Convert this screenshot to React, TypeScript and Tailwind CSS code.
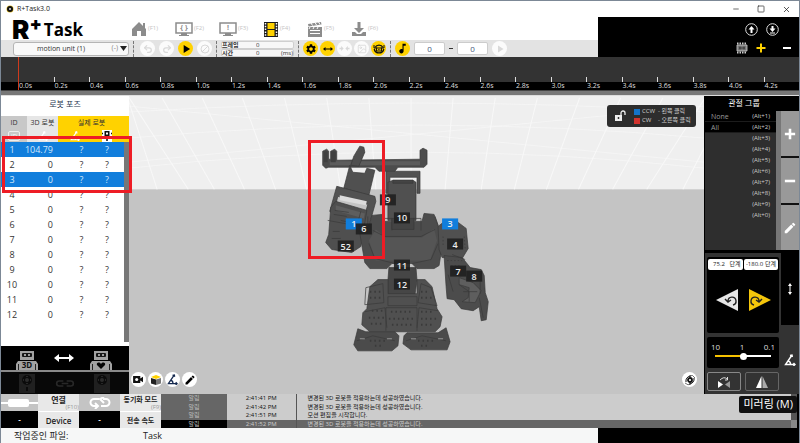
import { useState, type ReactNode } from "react";
import clsx from "clsx";
import { Image, Minus, Redo2, Square, Undo2, X } from "lucide-react";
import { MdEdit, MdMusicNote, MdPlayArrow, MdSettings } from "react-icons/md";

interface Pose {
  id: number;
  value: string;
  selected?: boolean;
}

interface LogEntry {
  time: string;
  message: string;
  active?: boolean;
}

const POSES: Pose[] = [
  { id: 1, value: "104.79", selected: true },
  { id: 2, value: "0" },
  { id: 3, value: "0", selected: true },
  ...[4, 5, 6, 7, 8, 9, 10, 11, 12].map((id) => ({ id, value: "0" })),
];

const LOGS: LogEntry[] = [
  { time: "2:41:41 PM", message: "변경된 3D 로봇을 적용하는데 성공하였습니다." },
  { time: "2:41:42 PM", message: "변경된 3D 로봇을 적용하는데 성공하였습니다." },
  { time: "2:41:51 PM", message: "모션 편집을 시작합니다." },
  { time: "2:41:52 PM", message: "변경된 3D 로봇을 적용하는데 성공하였습니다.", active: true },
];

const GROUPS = ["None", "All", "", "", "", "", "", "", "", ""];

const TICKS = Array.from({ length: 22 }, (_, i) => `${(i * 0.2).toFixed(1)}s`);

const JOINTS = [
  { id: "1", x: 354, y: 223, blue: true },
  { id: "6", x: 364, y: 228 },
  { id: "52", x: 346, y: 245 },
  { id: "9", x: 388, y: 199 },
  { id: "10", x: 402, y: 217 },
  { id: "3", x: 450, y: 223, blue: true },
  { id: "4", x: 455, y: 243 },
  { id: "11", x: 402, y: 264 },
  { id: "12", x: 402, y: 283 },
  { id: "7", x: 458, y: 270 },
  { id: "8", x: 474, y: 275 },
];

function RoundButton({ label, tone, children }: { label: string; tone: "on" | "off" | "white"; children: ReactNode }) {
  return (
    <button
      aria-label={label}
      className={clsx(
        "flex size-[15px] shrink-0 items-center justify-center rounded-full",
        tone === "on" && "bg-[#ffd200] text-black",
        tone === "off" && "bg-[#fbfbfb] text-[#d9d9d9]",
        tone === "white" && "bg-white text-black"
      )}
    >
      {children}
    </button>
  );
}

function Divider() {
  return <div className="h-4 shrink-0 border-l border-dashed border-[#777]" />;
}

function DoubleArrow({ className }: { className?: string }) {
  return (
    <svg viewBox="0 0 20 8" className={className} fill="currentColor">
      <path d="M0 4 5 0v3h10V0l5 4-5 4V5H5v3z" />
    </svg>
  );
}

function HomeIcon() {
  return (
    <svg viewBox="0 0 16 16" className="size-4" fill="#8c8c8c">
      <path d="M8 1 1 8v7h5v-5h4v5h5V8l-1-1V2h-2v3z" />
    </svg>
  );
}

function MonitorIcon({ sign }: { sign: string }) {
  return (
    <svg viewBox="0 0 18 16" className="h-4 w-[18px]">
      <path d="M1 2h16v10H1z" fill="#fff" stroke="#8c8c8c" strokeWidth="1.5" />
      <path d="M6 12h6v2h2v1H4v-1h2z" fill="#8c8c8c" />
      <text x="9" y="9" textAnchor="middle" fontSize="7" fontWeight="700" fill="#8c8c8c">
        {sign}
      </text>
    </svg>
  );
}

function FilmIcon() {
  return (
    <svg viewBox="0 0 16 16" className="size-4">
      <path d="M1 1h14v15H1z" fill="#1c1c1c" />
      <path d="M4.500 2h7v6h-7zM4.500 9h7v6h-7z" fill="#ffd200" />
      <path d="M2.500 2v13M13.500 2v13" stroke="#fff" strokeWidth="1.500" strokeDasharray="1.500 1.300" />
    </svg>
  );
}

function ClapperIcon() {
  return (
    <svg viewBox="0 0 16 16" className="size-4">
      <path d="M1 3 14 1l.500 2.500L1.500 5.500zM1 6h14v10H1z" fill="#8c8c8c" />
      <path d="m4 2 1.500 2.500M8 1.500 9.500 4M11.500 1 13 3.500M3 6l-1 2M7 6 6 8M11 6l-1 2" stroke="#fff" />
      <path d="M3 9.500h10M3 12.500h10" stroke="#fff" strokeWidth="1.200" />
    </svg>
  );
}

function DownloadIcon() {
  return (
    <svg viewBox="0 0 16 16" className="size-4" fill="#8c8c8c">
      <path d="M6.500 1h3v6H13l-5 5-5-5h3.500zM1 11h3l2 2h4l2-2h3v4H1z" />
    </svg>
  );
}

function AngleIcon({ className }: { className?: string }) {
  return (
    <svg viewBox="0 0 12 12" className={className} fill="none" stroke="currentColor" strokeWidth="1.400">
      <path d="M8 1 1.500 10.500H11M4 7c2 .3 2.500 1.500 2.500 3M6 1.500 8 1l.4 2M9.500 9l1.500 1.500L9.500 12" />
    </svg>
  );
}

function LinkIcon({ className }: { className?: string }) {
  return (
    <svg viewBox="0 0 24 10" className={className} fill="none" stroke="currentColor" strokeWidth="2">
      <path d="M10 2H5a3 3 0 0 0 0 6h5M14 2h5a3 3 0 0 1 0 6h-5M8 5h8" />
    </svg>
  );
}

function RobotIcon({ mark }: { mark: "3D" | "heart" }) {
  return (
    <svg viewBox="0 0 24 20" className="h-5 w-6">
      <path d="M5 1h14v9H5zM3 11h18l2 3v6H1v-6z" fill="#a2a2a2" />
      <rect x="7" y="3" width="10" height="4" rx="1" fill="#161616" />
      <path d="M9 5h2M13 5h2" stroke="#ccc" strokeWidth="1.500" />
      <path d="M3.500 14v6M20.500 14v6" stroke="#222" />
      {mark === "3D" ? (
        <text x="12" y="18" textAnchor="middle" fontSize="8" fontWeight="700" fill="#111">
          3D
        </text>
      ) : (
        <path d="m12 19-4-4c-1-2 2-4 4-1 2-3 5-1 4 1z" fill="#050505" />
      )}
    </svg>
  );
}

function ServoIcon({ body }: { body: boolean }) {
  return (
    <svg viewBox="0 0 18 20" className="h-5 w-[18px]">
      <rect x="1" y="1" width="16" height="19" fill="#202020" />
      <circle cx="9" cy="7" r="5" fill="#0b0b0b" />
      <circle cx="9" cy="7" r="2" fill="#2c2c2c" />
      <path d="M9 3v1M9 10v1M5 7h1M12 7h1" stroke="#444" />
      {body && <path d="M9 14v4" stroke="#0b0b0b" strokeWidth="2" />}
    </svg>
  );
}

function TitleBar() {
  return (
    <div className="flex h-4 items-center bg-white pl-[5px] text-[#222]">
      <svg viewBox="0 0 8 8" className="size-2">
        <circle cx="4" cy="4" r="3.500" fill="#e8bd16" />
        <path d="M4 1a3 3 0 1 0 0 6 3 3 0 0 0 0-6" fill="#111" />
        <circle cx="4" cy="4" r="1" fill="#ddd" />
      </svg>
      <span className="ml-[3px] text-[7px]">R+Task3.0</span>
      <div className="ml-auto flex items-center gap-[17px] pr-2">
        <button aria-label="Minimize"><Minus size={8} /></button>
        <button aria-label="Maximize"><Square size={8} /></button>
        <button aria-label="Close"><X size={9} /></button>
      </div>
    </div>
  );
}

function NavBar() {
  const items = [
    { icon: <HomeIcon />, key: "(F1)" },
    { icon: <MonitorIcon sign="{ }" />, key: "(F2)" },
    { icon: <MonitorIcon sign="!" />, key: "(F3)" },
    { icon: <FilmIcon />, key: "(F4)" },
    { icon: <ClapperIcon />, key: "(F5)" },
    { icon: <DownloadIcon />, key: "(F6)" },
  ];
  return (
    <div className="flex h-[23px] items-center bg-white pl-[11px]">
      <div className="flex w-[119px] items-center pt-[3px] text-black">
        <span className="font-['Inter'] text-[26px] leading-[20px] font-black">R</span>
        <span className="-mt-3 font-['Inter'] text-[18px] leading-[12px] font-black">+</span>
        <span className="ml-[2px] text-[17px] leading-[20px] font-bold">Task</span>
      </div>
      {items.map((item) => (
        <button key={item.key} className="flex w-11 items-center gap-px">
          {item.icon}
          <span className="text-[6px] text-[#c4c4c4]">{item.key}</span>
        </button>
      ))}
    </div>
  );
}

function Toolbar() {
  return (
    <div className="flex h-[17px] items-center gap-1 bg-[#e3e3e3] pl-3">
      <div className="relative h-[14px] w-[116px] shrink-0">
        <select
          aria-label="motion unit"
          className="block h-[14px] w-full appearance-none rounded-[3px] border border-[#b5b5b5] bg-[#f9f9f9] pr-5 text-center text-[7px] leading-[12px] text-[#333]"
        >
          <option>motion unit (1)</option>
        </select>
        <span className="pointer-events-none absolute inset-y-0 right-[2px] flex items-center gap-[2px] text-[7px] text-[#888]">
          (-)
          <svg viewBox="0 0 7 5" className="h-[5px] w-[7px]">
            <path d="M0 0h7L3.500 5z" fill="#222" />
          </svg>
        </span>
      </div>
      <Divider />
      <div className="flex gap-1 pl-[2px]">
        <RoundButton label="Undo" tone="off"><Undo2 size={10} strokeWidth={3} /></RoundButton>
        <RoundButton label="Redo" tone="off"><Redo2 size={10} strokeWidth={3} /></RoundButton>
        <RoundButton label="Play" tone="on"><MdPlayArrow size={14} /></RoundButton>
        <RoundButton label="Stop" tone="off">
          <svg viewBox="0 0 10 10" className="size-[10px]" fill="none" stroke="currentColor">
            <circle cx="5" cy="5" r="4" />
            <path d="M8 2 2 8" />
          </svg>
        </RoundButton>
      </div>
      <Divider />
      <div className="w-[73px] shrink-0 text-[6px] font-bold text-[#333]">
        {["프레임", "시간"].map((label) => (
          <label key={label} className="flex h-2 items-center rounded-[2px] border border-[#cfcfcf] bg-[#f7f7f7] leading-[6px]">
            <span className="w-[30px]">{label}</span>
            <input defaultValue="0" className="h-[6px] w-4 bg-transparent pl-1 font-normal" />
            {label === "시간" && <span className="ml-auto font-normal">(ms)</span>}
          </label>
        ))}
      </div>
      <Divider />
      <div className="flex gap-[2px]">
        <RoundButton label="Settings" tone="on"><MdSettings size={12} /></RoundButton>
        <RoundButton label="Stretch" tone="on"><DoubleArrow className="h-1 w-[10px]" /></RoundButton>
        <RoundButton label="Shrink" tone="off">
          <svg viewBox="0 0 12 6" className="h-[5px] w-[11px]" fill="currentColor">
            <path d="M0 2h2V0l3 3-3 3V4H0zM12 2h-2V0L7 3l3 3V4h2z" />
          </svg>
        </RoundButton>
        <RoundButton label="Picture" tone="off"><Image size={10} strokeWidth={2} /></RoundButton>
        <RoundButton label="Robot view" tone="on">
          <svg viewBox="0 0 12 12" className="size-3" fill="none" stroke="#111">
            <path d="M2 4.500a4.500 4.500 0 0 1 8 0M1.200 6a4.900 4.900 0 0 0 9.600 0" strokeWidth="1.300" />
            <path d="M1 2v3h3M11 2v3H8" />
            <rect x="3.500" y="5" width="5" height="3" />
            <path d="M5 6.500h.7M6.500 6.500h.7" />
          </svg>
        </RoundButton>
      </div>
      <Divider />
      <RoundButton label="Music" tone="on"><MdMusicNote size={13} /></RoundButton>
      <input aria-label="Start" defaultValue="0" className="h-[13px] w-[31px] rounded-[2px] border border-[#ccc] bg-white text-center text-[8px] text-[#445a7a]" />
      <span className="h-px w-1 bg-[#333]" />
      <input aria-label="End" defaultValue="0" className="h-[13px] w-[31px] rounded-[2px] border border-[#ccc] bg-white text-center text-[8px] text-[#445a7a]" />
      <RoundButton label="Play music" tone="off"><MdPlayArrow size={12} /></RoundButton>
    </div>
  );
}

function CornerTools() {
  return (
    <div className="flex w-[201px] shrink-0 flex-col items-end justify-between bg-black pt-[6px] pr-[7px] pb-[3px] text-white">
      <div className="flex gap-2 pr-[13px]">
        {["M6.500 3 3.500 6.500h2V10h2V6.500h2z", "M5.500 3h2v2.500h2L6.500 9l-3-3.500h2zM4 9.500h5v1H4z"].map((d) => (
          <button key={d} aria-label="Transfer">
            <svg viewBox="0 0 13 13" className="size-[13px]">
              <circle cx="6.500" cy="6.500" r="5.800" fill="none" stroke="#ddd" />
              <path d={d} fill="#fff" />
            </svg>
          </button>
        ))}
      </div>
      <div className="flex items-center">
        <button aria-label="Frames">
          <svg viewBox="0 0 12 12" className="size-3">
            <path d="M1 1.500h10M1 10.500h10" stroke="#ccc" strokeWidth="2" strokeDasharray="1.500 1" />
            <path d="M1 3h10v6H1z" fill="#777" stroke="#ccc" strokeWidth=".8" />
            <path d="M3 6h6M4 4.500v3M8 4.500v3" stroke="#222" strokeWidth=".7" />
          </svg>
        </button>
        <button aria-label="Add frame" className="ml-2 text-[#ffd200]">
          <svg viewBox="0 0 10 10" className="size-[10px]">
            <path d="M5 .5v9M.5 5h9" stroke="currentColor" strokeWidth="2" />
          </svg>
        </button>
        <button aria-label="Remove frame" className="ml-4">
          <svg viewBox="0 0 10 10" className="size-[10px]">
            <path d="M1 5h8" stroke="currentColor" strokeWidth="2" />
          </svg>
        </button>
      </div>
    </div>
  );
}

function Timeline() {
  return (
    <div className="shrink-0">
      <div className="relative bg-[linear-gradient(to_bottom,#333_25px,#000_25px)] pl-[17px]">
        <div className="flex h-[33px] items-end">
          {TICKS.map((tick) => (
            <div key={tick} className="flex-1">
              <div className="h-[5px] border-l border-[#ddd]" />
              <div className="pl-px text-[7px] leading-[8px] text-[#ddd]">{tick}</div>
            </div>
          ))}
        </div>
        <div className="absolute top-0 left-[17px] h-full w-px bg-[#d03a1c]" />
      </div>
      <div className="h-[6px] border-t border-b border-t-[#444] border-b-[#ddd] bg-[#777]" />
    </div>
  );
}

function PosePanel() {
  return (
    <aside className="flex w-32 shrink-0 flex-col bg-white">
      <h2 className="h-5 text-center text-[8px] leading-[16px] text-[#27364f]">로봇 포즈</h2>
      <div className="flex flex-1 flex-col">
        <table className="w-full table-fixed border-collapse text-center">
          <colgroup>
            <col className="w-[26px]" />
            <col className="w-[31px]" />
            <col />
            <col className="w-[20px]" />
            <col className="w-[12px]" />
          </colgroup>
          <thead className="text-[7px] leading-[13px] text-[#333]">
            <tr className="h-[13px]">
              <th className="bg-[#c8c8c8] font-normal">ID</th>
              <th className="bg-[#e6e6e6] font-normal whitespace-nowrap">3D 로봇</th>
              <th colSpan={3} className="bg-[#ffd200] pr-1 font-normal">실제 로봇</th>
            </tr>
            <tr className="h-[13px] text-white">
              <td className="bg-[#c8c8c8]">
                <span className="mx-auto block h-[10px] w-3 rounded-[2px] border border-[#eee] text-[6px] leading-[8px]">ID</span>
              </td>
              <td className="bg-[#e6e6e6]"><AngleIcon className="mx-auto size-[10px]" /></td>
              <td className="bg-[#ffd200]"><AngleIcon className="ml-3 size-[10px]" /></td>
              <td className="bg-[#ffd200]">
                <svg viewBox="0 0 12 12" className="mx-auto size-3">
                  <path d="M1 0h10v12H1z" fill="#fff" />
                  <path d="M3.500 1h5v5h-5z" fill="#111" />
                  <path d="M5 2.500h2v2H5z" fill="#fff" />
                  <path d="M6 6v5M1 3.500h1M10 3.500h1" stroke="#111" strokeWidth="1.500" />
                </svg>
              </td>
              <td className="bg-[#ffd200]" />
            </tr>
          </thead>
        </table>
        <div className="flex flex-1 bg-white pb-6">
          <div className="flex-1">
            <table className="w-full table-fixed border-collapse text-[9px] leading-[14px]">
              <tbody>
                {POSES.map((pose) => (
                  <tr
                    key={pose.id}
                    className={clsx("h-[15px]", pose.selected ? "bg-[#117edc] text-[#d3e8fb]" : "text-[#333]")}
                  >
                    <td className="w-[22px] text-center">{pose.id}</td>
                    <td className="w-[30px] text-right">{pose.value}</td>
                    <td className="pl-4 text-center">?</td>
                    <td className="w-[30px] pr-1 text-center">?</td>
                  </tr>
                ))}
              </tbody>
            </table>
          </div>
          <div className="-mb-5 w-[5px] bg-[#777]" />
        </div>
      </div>
      <div className="bg-black">
        <div className="flex h-6 items-end justify-between pr-4 pl-[14px] text-white">
          <RobotIcon mark="3D" />
          <DoubleArrow className="mb-2 h-2 w-5" />
          <RobotIcon mark="heart" />
        </div>
        <div className="flex h-6 items-center justify-between border-t-2 border-[#8a8a8a] bg-[#080808] pr-[18px] pl-[17px] text-[#282828]">
          <ServoIcon body />
          <LinkIcon className="h-[9px] w-5" />
          <ServoIcon body={false} />
        </div>
      </div>
    </aside>
  );
}

function RobotScene() {
  return (
    <svg viewBox="129 96 575 297" preserveAspectRatio="xMidYMid slice" className="absolute inset-0 h-full w-full">
      <path d="M0 96h1000v93H0z" fill="#efefef" />
      <path d="M0 189h1000v204H0z" fill="#c4c4c4" />
      <g stroke="#f8f8f8" fill="none">
        <path d="m129 99 29 90M129 96l60 93M163 98l52 91M203 98l42 91M243 98l33 91M285 98l22 91M327 98l14 91M369 98l7 91M411 98v91M453 98l-8 91M495 98l-14 91M537 98l-23 91M579 98l-33 91M620 98l-42 91M662 98l-50 91M704 98l-58 91M704 146l-22 43" />
        <path d="M129 112q288 -18 575 0M129 138q288 -26 575 0M129 168q288 -32 575 0M129 106l575 56M129 162l575 -56" strokeWidth=".6" />
      </g>

      <g stroke="#3a3a3a" strokeWidth=".7" strokeLinejoin="round">
        {/* head bracket and wide bar */}
        <path d="M386 171h34v22h-3v-16h-27v16h-4z" fill="#525252" />
        <path d="M388 182l5-2h20l3 2v38h-28z" fill="#505050" />
        <path d="M393 180h20v3h-20z" fill="#444" />
        <path d="M323 151l4-2 2 2v8h2v-8l4-2 2 2v9l83-1v-9l3-2 4 2v14l-3 3h-26l-3 4h-16l-4-4h-46l-3 1-3-3z" fill="#4c4c4c" />
        <path d="M330 161h90v4h-90z" fill="#5c5c5c" stroke="none" />
        <path d="M324 151h4v11h-4zM331 151h5v11h-5z" fill="#404040" stroke="none" />

        {/* raised arm */}
        <path d="M360 146l4 1 1 5-6 14-8-1 3-9z" fill="#505050" />
        <path d="M350 165l3 7 12 1 2-5 8 2-6 25-25-7z" fill="#505050" />
        <path d="M337 186l38 10 1 5-9 32-7-1 8-28-30-8-4 18-4-3z" fill="#525252" />
        <path d="M340 195l27 6-1 4-26-5z" fill="#dcdcdc" stroke="none" />
        <path d="M336 201l31 9-6 36-9 6-20-3-6-7 3-8 1-13 1-14z" fill="#4f4f4f" />
        <path d="M336 205l29 8-1 5-28-8z" fill="#5e5e5e" stroke="none" />
        <path d="M335 210l14 2M334 214l13 2M341 220l9 2M361 211l-4 15M333 231h7M332 238h9M328 220l33 6" />

        {/* chest */}
        <path d="M369 227l3-12 10-1 3 7h37l2-8 10 1 4 11 6 9-5 31-5 3h-17l-5-5h-20l-5 5h-17l-5-6-5-29z" fill="#4c4c4c" />
        <path d="M376 229l10 8h36l12-9 3 12-7 20h-54l-7-20z" fill="#555" stroke="none" />
        <path d="M373 230l12 6h36l14-7M369 243l6 15 20 5M438 243l-7 16-19 4M385 218h7v12M413 218h8v12M368 216v14M435 216l3 9" fill="none" />
        <path d="M392 218h22v11h-22z" fill="#444" />

        {/* lowered arm */}
        <path d="M438 226l5-4h15l8 6 2 20-6 10-20-1-3-8z" fill="#505050" />
        <path d="M444 255l18 2 8 10 11 2 3 6 1 17 3 9-2 18-5 1-2-14-6 4-12-2-7-9-7-1-1-12z" fill="#4c4c4c" />
        <path d="M459 277l14 5 8 8-6 12-13-1 6-4 1-10-10-3z" fill="#5e5e5e" />
        <path d="M452 254l13 5M448 274l5 17M480 278v15M463 291h14M479 297l4 20M459 284l10 7v10" fill="none" />
        <path d="M447 260h15M451 265h9M443 236v10M464 236l1 12" strokeDasharray="1.500 2" />

        {/* waist and legs */}
        <path d="M389 267h27l1 13-2 14h-27v-14z" fill="#464646" />
        <path d="M370 286l8-7h10v14h29v-14h8l7 7 5 22 5 8-2 10-5 5h-65l-8-7 1-12 4-4z" fill="#505050" />
        <path d="M358 328l8 3h29l4 4-1 10-6 5h-34l-4-6zM407 332h31l8-5 4 14-3 8h-36l-8-6 1-8z" fill="#4b4b4b" />
        <path d="M366 287l17-4 1 19-19 2zM421 283l10 4 6 18-19-3zM388 296h29v9h-29zM365 311l20-4 2 20M438 310l-19-3-2 20M386 307h31v23M386 307v23M357 340l16-5 22 5M406 340l16-5 24 5" fill="none" />
        <path d="M372 310h12M369 317h15M371 323h13M391 311h22M389 318h26M392 324h20M421 311h12M421 318h16M421 324h13M370 291h12M421 291h9M370 297h11M421 297h12M370 340h16M418 340h16M375 345h8M421 345h8" strokeWidth="2" strokeDasharray="1.500 3" />
        <path d="M360 338h5M387 338h5M411 338h5M438 338h5" stroke="#bbb" />
      </g>

      {JOINTS.map((joint) => (
        <g key={joint.id}>
          <rect x={joint.x - 8} y={joint.y - 5} width="16" height="11" fill={joint.blue ? "#117edc" : "#1f1f1f"} fillOpacity={joint.blue ? 1 : 0.9} />
          <text x={joint.x} y={joint.y + 4} textAnchor="middle" fontSize="9" fontWeight="600" fill="#eee">
            {joint.id}
          </text>
        </g>
      ))}
    </svg>
  );
}

function Viewport() {
  return (
    <main className="relative flex min-w-0 flex-1 flex-col justify-between">
      <RobotScene />
      <div className="relative mt-[9px] mr-2 flex h-[22px] w-[89px] items-center gap-2 self-end rounded-[3px] bg-[#2d2d2d] pl-[7px] text-[#ccc]">
        <svg viewBox="0 0 12 12" className="size-3">
          <path d="M1 5h7v6H1z" fill="#eee" />
          <path d="M7 5V3a2 2 0 0 1 4 0v2" fill="none" stroke="#eee" strokeWidth="1.300" />
          <path d="M4.500 7v2" stroke="#333" strokeWidth="1.500" />
        </svg>
        <div className="text-[6px] leading-[9px]">
          <div className="flex items-center gap-[2px]">
            <span className="size-[6px] bg-[#1473c8]" />
            <span className="w-[14px]">CCW</span>
            <span className="whitespace-nowrap">- 왼쪽 클릭</span>
          </div>
          <div className="flex items-center gap-[2px]">
            <span className="size-[6px] bg-[#d2322d]" />
            <span className="w-[14px]">CW</span>
            <span className="whitespace-nowrap">- 오른쪽 클릭</span>
          </div>
        </div>
      </div>
      <div className="relative mb-[7px] flex gap-[2px] pr-[7px] pl-[2px]">
        <RoundButton label="Camera" tone="white">
          <svg viewBox="0 0 12 10" className="h-[9px] w-[11px]">
            <path d="M0 1h8v3l3-2v6L8 6v3H0z" fill="#111" />
            <circle cx="4" cy="5" r="1.700" fill="#fff" />
          </svg>
        </RoundButton>
        <RoundButton label="Cube" tone="white">
          <svg viewBox="0 0 12 12" className="size-3">
            <path d="M1 3l5-2 5 2-5 2z" fill="#ffd200" />
            <path d="M1 4l5 1.500V11L1 9.500z" fill="#222" />
            <path d="M11 4 6 5.500V11l5-1.500z" fill="#777" />
          </svg>
        </RoundButton>
        <RoundButton label="Angle" tone="white"><AngleIcon className="size-[11px] text-[#14284e]" /></RoundButton>
        <RoundButton label="Edit" tone="white"><MdEdit size={12} /></RoundButton>
        <span className="flex-1" />
        <RoundButton label="Reset view" tone="white">
          <svg viewBox="0 0 12 12" className="size-3" fill="none" stroke="#111">
            <circle cx="6" cy="6" r="2" strokeWidth="1.800" />
            <path d="M2 8a5 5 0 0 1 5-6M10 4a5 5 0 0 1-5 6" />
            <path d="M1 9q3 3 6 1M5 2q4-2 6 2" strokeWidth=".6" />
          </svg>
        </RoundButton>
      </div>
    </main>
  );
}

function JointPanel() {
  const [step, setStep] = useState(50);
  return (
    <aside className="flex w-[95px] shrink-0 flex-col border-l border-black bg-black text-white">
      <h2 className="h-[15px] pr-4 text-center text-[8px] leading-[14px]">관절 그룹</h2>
      <div className="flex flex-1 bg-[#2e2e2e]">
        <div className="flex flex-1 flex-col">
          {GROUPS.map((name, i) => (
            <button
              key={i}
              className={clsx(
                "flex h-[11px] items-center justify-between pr-1.5 pl-1.5 text-[7px] leading-[11px] text-[#999]",
                name && "border-b border-[#1c1c1c] bg-black"
              )}
            >
              <span>{name}</span>
              <span className="text-[6px] text-[#ccc]">(Alt+{(i + 1) % 10})</span>
            </button>
          ))}
        </div>
        <div className="w-[5px] bg-[#777]" />
        <div className="flex w-[18px] flex-col gap-[2px] bg-[#111]">
          {["M7 1v12M1 7h12", "M1 7h12"].map((d) => (
            <button key={d} aria-label="Group" className="flex flex-1 items-center justify-center bg-[#999]">
              <svg viewBox="0 0 14 14" className="size-3">
                <path d={d} stroke="#fff" strokeWidth="3" />
              </svg>
            </button>
          ))}
          <button aria-label="Edit group" className="flex flex-1 items-center justify-center bg-[#999]">
            <MdEdit size={14} />
          </button>
        </div>
      </div>
      <div className="flex h-36 border-t-[3px] border-black">
        <div className="flex flex-1 flex-col gap-1 bg-[#333] p-[2px] pt-1">
          <div className="flex flex-1 flex-col rounded-[2px] bg-black">
            <div className="flex gap-px p-px pt-[2px]">
              {["75.2", "-180.0"].map((value) => (
                <label key={value} className="flex h-[11px] flex-1 items-center justify-between rounded-[2px] bg-white px-[2px] text-[6px] whitespace-nowrap text-[#222]">
                  <input defaultValue={value} className="w-[18px] text-center" />
                  단계
                </label>
              ))}
            </div>
            <div className="flex flex-1 items-center justify-center gap-[11px] pb-1">
              <button aria-label="Rotate left">
                <svg viewBox="0 0 22 22" className="size-[22px]">
                  <path d="M0 11 22 0v22z" fill="#e6e6e6" />
                  <path d="M12 12a4 4 0 1 1 5 4M9 10l3 3 3-2" fill="none" stroke="#222" strokeWidth="1.400" />
                </svg>
              </button>
              <button aria-label="Rotate right">
                <svg viewBox="0 0 22 22" className="size-[22px]">
                  <path d="M22 11 0 0v22z" fill="#f4c60b" />
                  <path d="M10 12a4 4 0 1 0-5 4M13 10l-3 3-3-2" fill="none" stroke="#222" strokeWidth="1.400" />
                </svg>
              </button>
            </div>
          </div>
          <div className="h-[31px] rounded-[2px] bg-black px-1 pt-[5px]">
            <div className="flex justify-between text-[8px] leading-[10px] text-[#ddd]">
              <span>10</span>
              <span>1</span>
              <span>0.1</span>
            </div>
            <div className="flex h-2 items-center px-1">
              <input
                type="range"
                aria-label="Step"
                value={step}
                onChange={(e) => setStep(Number(e.target.value))}
                className="h-[2px] w-full appearance-none bg-[linear-gradient(to_right,#f6c200_50%,#fff_50%)] [&::-webkit-slider-thumb]:size-[7px] [&::-webkit-slider-thumb]:appearance-none [&::-webkit-slider-thumb]:rounded-full [&::-webkit-slider-thumb]:bg-white"
              />
            </div>
          </div>
          <div className="flex gap-1 pb-px">
            <button aria-label="Flip" className="flex h-[19px] flex-1 items-center justify-center rounded-[2px] border border-[#888]">
              <svg viewBox="0 0 14 12" className="h-3 w-[14px]">
                <path d="M1 5v7l5-3.500z" fill="#fff" />
                <path d="M13 5v7L8 8.500z" fill="#999" />
                <path d="M3 4q4-4 7-1M10.500 1v3H8" fill="none" stroke="#ddd" />
              </svg>
            </button>
            <button aria-label="미러링 (M)" className="flex h-[19px] flex-1 items-center justify-center rounded-[2px] border border-[#666]">
              <svg viewBox="0 0 14 12" className="h-3 w-[14px]">
                <path d="M6.500 0v12H1z" fill="#fff" />
                <path d="M7.500 0v12H13z" fill="#aaa" />
              </svg>
            </button>
          </div>
        </div>
        <div className="flex w-[18px] flex-col bg-[#333]">
          <button aria-label="Move" className="flex h-[72px] items-center justify-center bg-black">
            <svg viewBox="0 0 6 12" className="h-3 w-[6px]" fill="#fff">
              <path d="M3 0l2 3H3.500v6H5l-2 3-2-3h1.500V3H1z" />
            </svg>
          </button>
          <button aria-label="Angle" className="flex flex-1 items-center justify-center">
            <AngleIcon className="size-3" />
          </button>
        </div>
      </div>
    </aside>
  );
}

function ConnectionPanel() {
  return (
    <div className="grid w-40 shrink-0 grid-cols-[37px_1fr_41px_1fr] grid-rows-2 text-[8px] leading-[9px] font-semibold text-[#222]">
      <div className="flex items-center bg-[#c4c4c4]">
        <svg viewBox="0 0 37 12" className="h-3 w-full" fill="#fff">
          <path d="M0 5h37v2H0z" />
          <rect x="7" y="2" width="21" height="8" rx="2" />
        </svg>
      </div>
      <button className="flex flex-col items-center justify-between bg-[#e8e8e8] pt-px">
        <span className="font-bold">연결</span>
        <span className="self-end text-[6px] leading-[7px] font-normal text-[#999]">(F10)</span>
      </button>
      <div className="flex items-center justify-center bg-[#c4c4c4] text-white">
        <svg viewBox="0 0 24 12" className="h-3 w-6" fill="none" stroke="currentColor" strokeWidth="2">
          <path d="M11 2H6a3.500 3.500 0 0 0 0 7h3M13 9h5a3.500 3.500 0 0 0 0-7h-3M7 6l3 3-3 3M16 0l-4 2 4 4" />
        </svg>
      </div>
      <button className="flex flex-col items-center justify-between bg-[#e8e8e8] pt-px">
        <span className="text-[7px] font-bold whitespace-nowrap">동기화 모드</span>
        <span className="self-end text-[6px] leading-[7px] font-normal text-[#999]">(F9)</span>
      </button>
      <div className="flex items-center justify-center bg-black text-white">-</div>
      <button className="border-t border-white bg-[#e8e8e8]">Device</button>
      <div className="flex items-center justify-center bg-black text-white">-</div>
      <button className="border-t border-white bg-[#e8e8e8] text-[7px] font-bold whitespace-nowrap">전송 속도</button>
    </div>
  );
}

function LogPanel() {
  return (
    <div className="flex min-w-0 flex-1 bg-black pr-[2px]">
      <table className="flex-1 table-fixed border-collapse text-[6px] leading-[8px] text-[#111]">
        <tbody>
          {LOGS.map((log) => (
            <tr key={log.time} className={clsx("h-2", log.active ? "bg-[#666] text-[#ccc]" : "bg-[#ccc]")}>
              <td className={clsx("w-[66px] text-center text-[#bbb]", log.active ? "bg-black" : "bg-[#666]")}>알림</td>
              <td className="w-[69px] border-r border-[#555] text-center">{log.time}</td>
              <td className="pl-[11px]">{log.message}</td>
            </tr>
          ))}
        </tbody>
      </table>
      <div className="w-[6px] border-b-8 border-[#888] bg-[#555]" />
    </div>
  );
}

export default function App() {
  return (
    <div className="relative flex min-h-screen flex-col border border-[#7c8896] bg-white font-['Open_Sans','Noto_Sans_CJK_KR',sans-serif] select-none">
      <TitleBar />
      <div className="flex h-10 shrink-0">
        <div className="min-w-0 flex-1">
          <NavBar />
          <Toolbar />
        </div>
        <CornerTools />
      </div>
      <Timeline />
      <div className="flex flex-1">
        <PosePanel />
        <Viewport />
        <JointPanel />
      </div>
      <div className="relative flex h-[34px] shrink-0">
        <ConnectionPanel />
        <LogPanel />
        <div role="tooltip" className="absolute top-[2px] right-[2px] h-[17px] rounded-[2px] bg-[#111] px-1 text-[11px] leading-[16px] text-white">
          미러링 (M)
        </div>
      </div>
      <footer className="flex h-[15px] shrink-0 text-[9px] leading-[15px] text-[#222]">
        <div className="flex min-w-0 flex-1 bg-[#f6f7f7] pl-[13px]">
          <span className="w-[129px]">작업중인 파일:</span>
          <span>Task</span>
        </div>
        <div className="w-[201px] bg-black" />
      </footer>

      {/* highlight frames */}
      <div className="pointer-events-none absolute top-[135px] left-px h-[57px] w-[130px] border-[3px] border-[#ee1c25]" />
      <div className="pointer-events-none absolute top-[139px] left-[307px] h-[119px] w-[77px] border-[3px] border-[#ee1c25]" />
    </div>
  );
}
